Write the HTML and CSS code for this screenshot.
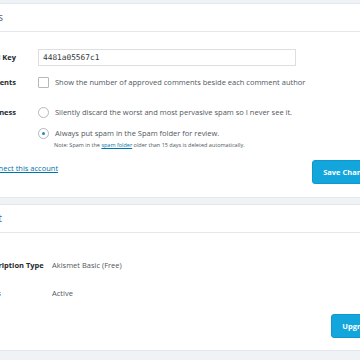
FILE: index.html
```html
<!DOCTYPE html>
<html lang="en">
<head>
    <meta charset="UTF-8">
    <meta name="viewport" content="width=device-width, initial-scale=1.0">
    <title>Akismet Settings</title>
    <link rel="stylesheet" href="styles.css">
</head>
<body>
    <div class="wrap">
        <div class="card">
            <div class="card-header"><span class="card-title">Settings</span></div>
            <div class="card-body">
                <div class="row row-key">
                    <div class="label">API Key</div>
                    <div class="value">
                        <input type="text" class="key-input" value="4481a05567c1">
                    </div>
                </div>
                <div class="row row-comments">
                    <div class="label">Comments</div>
                    <div class="value">
                        <label class="option"><span class="checkbox"></span>Show the number of approved comments beside each comment author</label>
                    </div>
                </div>
                <div class="row row-strict">
                    <div class="label">Strictness</div>
                    <div class="value">
                        <label class="option"><span class="radio"></span>Silently discard the worst and most pervasive spam so I never see it.</label>
                        <label class="option option-second"><span class="radio checked"></span>Always put spam in the Spam folder for review.</label>
                        <p class="note">Note: Spam in the <a href="#">spam folder</a> older than 15 days is deleted automatically.</p>
                    </div>
                </div>
            </div>
            <div class="card-actions">
                <a href="#" class="disconnect">Disconnect this account</a>
                <button class="btn btn-save">Save Changes</button>
            </div>
        </div>

        <div class="card card-account">
            <div class="card-header"><span class="card-title">Account</span></div>
            <div class="card-body account-body">
                <div class="row acc-row">
                    <div class="acc-label">Subscription Type</div>
                    <div class="acc-value">Akismet Basic (Free)</div>
                </div>
                <div class="row acc-row">
                    <div class="acc-label">Status</div>
                    <div class="acc-value">Active</div>
                </div>
            </div>
            <div class="card-actions account-actions">
                <button class="btn btn-upgrade">Upgrade</button>
            </div>
        </div>
    </div>
</body>
</html>
```

FILE: styles.css
```css
body {
    font-family: "Open Sans", Arial, sans-serif;
    margin: 0;
    padding: 0;
    background-color: #f0f3f6;
    color: #3c434a;
    font-size: 7.5px;
    overflow: hidden;
}

.wrap {
    margin-left: -140px;
    width: 545px;
    padding-top: 3px;
}

.card {
    background-color: #fff;
    border-top: 1px solid #e4e8ec;
    border-bottom: 1px solid #e4e8ec;
    margin-bottom: 6px;
}

.card-header {
    height: 27px;
    line-height: 27px;
    font-size: 10.5px;
    color: #50627a;
    border-bottom: 1px solid #e4e8ec;
}

/* title sits mostly off the left edge, like the cropped reference */
.card-title {
    display: inline-block;
    width: 143px;
    text-align: right;
}

.card-account .card-title {
    width: 142px;
}

.card-body {
    padding: 0 20px;
}

.row {
    display: flex;
}

.label {
    width: 136px;
    padding-right: 22px;
    text-align: right;
    font-weight: bold;
    color: #23282d;
}

.value {
    flex: 1;
}

.row-key {
    height: 26px;
    margin-top: 12px;
    align-items: center;
}

.key-input {
    width: 258px;
    height: 17px;
    box-sizing: border-box;
    border: 1px solid #dcdee0;
    padding: 0 4px;
    font-family: "DejaVu Sans Mono", "Liberation Mono", monospace;
    font-size: 7.8px;
    color: #32373c;
    margin: 0;
}

.row-comments {
    height: 24px;
    align-items: center;
}

.option {
    display: flex;
    align-items: center;
    height: 14px;
    color: #50575e;
}

.checkbox {
    width: 9px;
    height: 9px;
    border: 1px solid #b4b9be;
    border-radius: 1px;
    margin-right: 6px;
}

.row-strict {
    margin-top: 11px;
}

.row-strict .label {
    line-height: 14px;
}

.radio {
    width: 9px;
    height: 9px;
    border: 1px solid #b4b9be;
    border-radius: 50%;
    margin-right: 6px;
    position: relative;
}

.radio.checked::after {
    content: "";
    position: absolute;
    left: 3px;
    top: 3px;
    width: 3px;
    height: 3px;
    border-radius: 50%;
    background-color: #1e8cbe;
}

.option-second {
    margin-top: 7px;
}

.note {
    margin: 1px 0 0 16px;
    font-size: 5.5px;
    line-height: 8px;
    color: #50575e;
}

.note a {
    color: #0073aa;
}

.card-actions {
    display: flex;
    justify-content: space-between;
    align-items: flex-start;
    padding: 11px 20px 13px 20px;
}

.disconnect {
    margin-top: 3px;
    margin-left: 95px;
    color: #0073aa;
}

.btn {
    background-color: #13a6dc;
    color: #fff;
    border: 1px solid #0f98cb;
    border-radius: 3px;
    font-family: "Open Sans", Arial, sans-serif;
    font-weight: bold;
    font-size: 7.5px;
    height: 24px;
    padding: 0 10px;
    cursor: pointer;
}

.account-body {
    padding-top: 18px;
}

.acc-row {
    height: 28px;
    align-items: center;
}

.acc-label {
    width: 172px;
    padding-left: 97px;
    box-sizing: border-box;
    font-weight: bold;
    color: #23282d;
}

.acc-value {
    color: #50575e;
}

.account-actions {
    justify-content: flex-end;
    padding: 7px 20px 12px 20px;
}
```
